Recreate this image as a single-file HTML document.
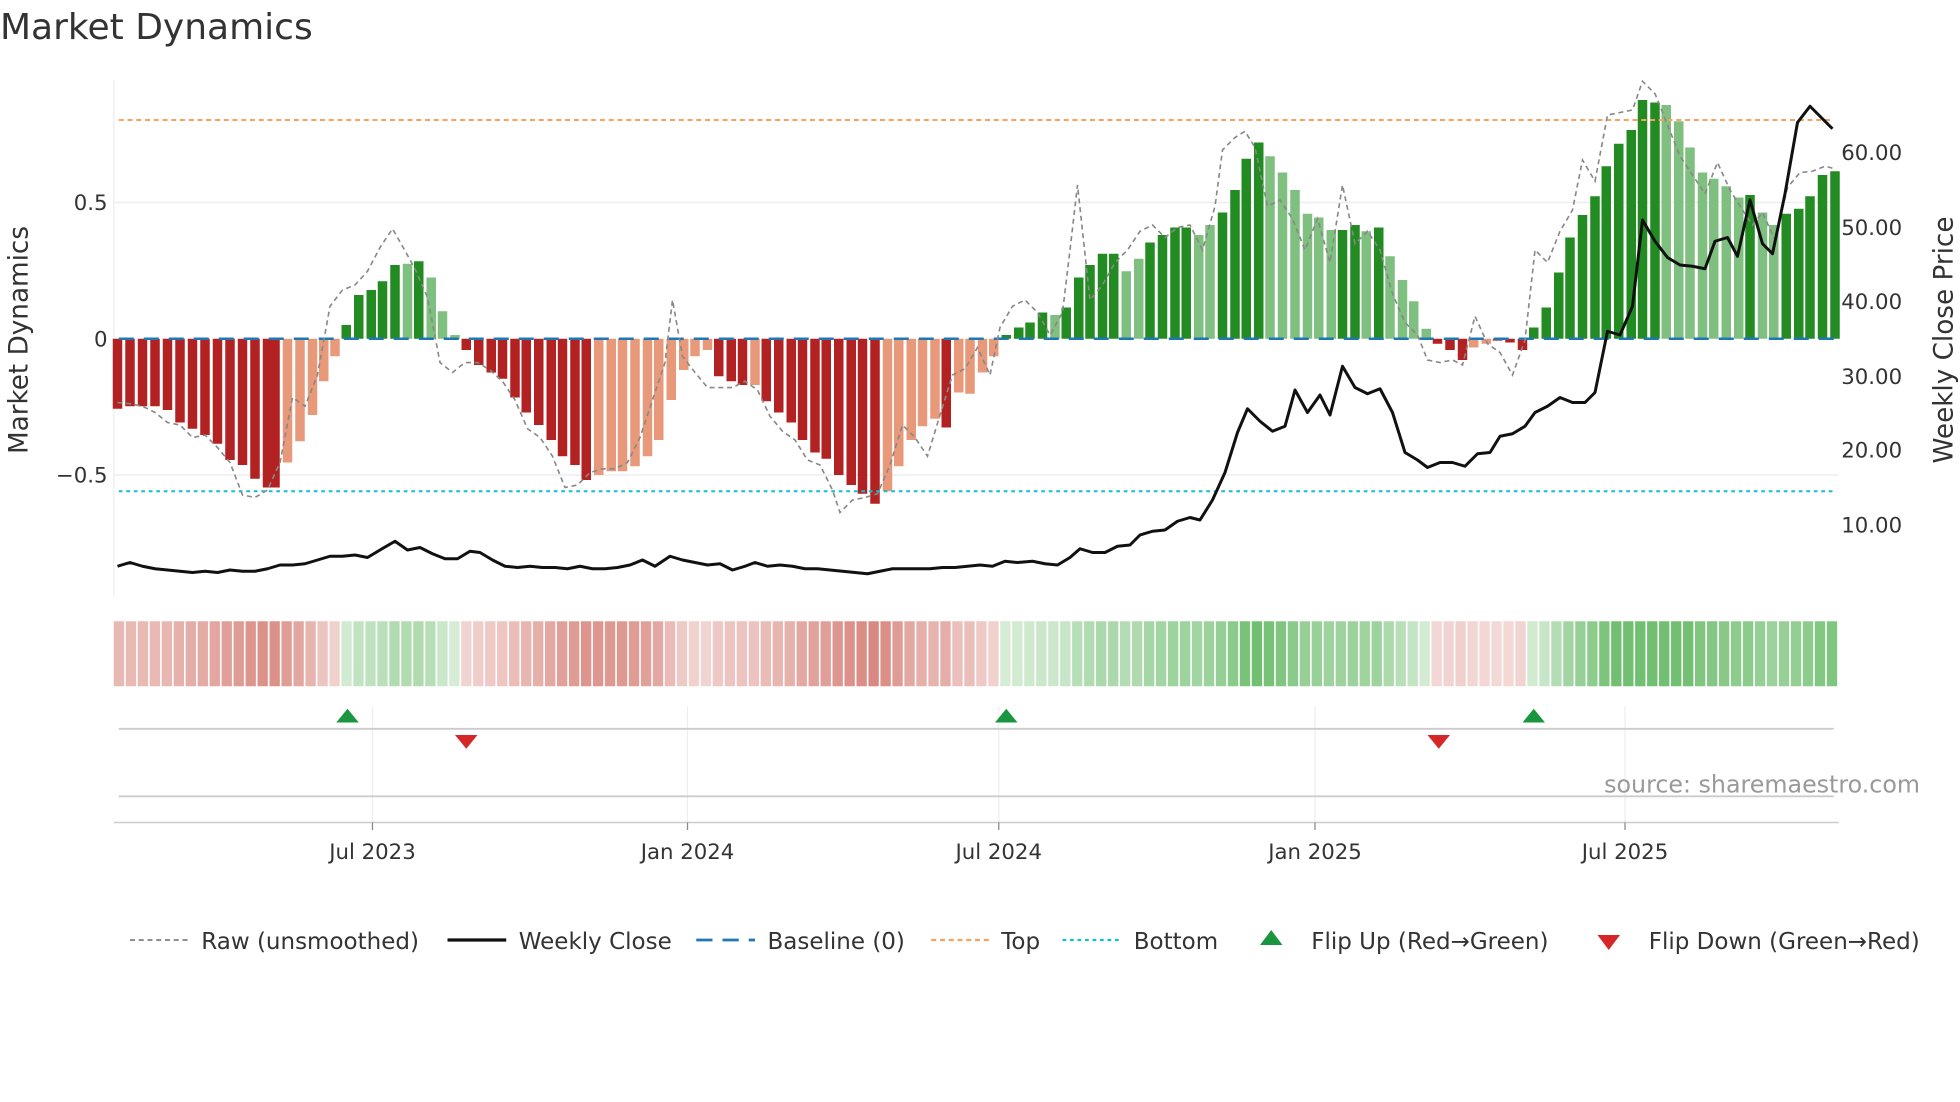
<!DOCTYPE html>
<html><head><meta charset="utf-8">
<style>
html,body{margin:0;padding:0;background:#fff;width:1960px;height:1102px;overflow:hidden}
svg{display:block}
text{font-family:"DejaVu Sans","Liberation Sans",sans-serif}
</style></head><body>
<svg id="s" width="1960" height="1102" viewBox="0 0 1568 881.6" xmlns="http://www.w3.org/2000/svg">
<rect width="1568" height="882" fill="#fff"/>
<text x="0" y="31" font-size="28.8" fill="#333">Market Dynamics</text>
<line x1="91" y1="162" x2="1471" y2="162" stroke="#eceef3" stroke-width="1.2"/>
<line x1="91" y1="380" x2="1471" y2="380" stroke="#eceef3" stroke-width="1.2"/>
<line x1="91" y1="64" x2="91" y2="478" stroke="#eee" stroke-width="1"/>
<g id="bars"></g>
<g id="heat"></g>
<line x1="95" y1="271" x2="1467" y2="271" stroke="#1f77b4" stroke-width="2" stroke-dasharray="12,8"/>
<line x1="95" y1="96" x2="1467" y2="96" stroke="#f4a460" stroke-width="1.6" stroke-dasharray="4,3"/>
<line x1="95" y1="393" x2="1467" y2="393" stroke="#17becf" stroke-width="1.6" stroke-dasharray="3,3"/>
<polyline id="raw" fill="none" stroke="#888" stroke-width="1.3" stroke-dasharray="4,3"/>
<polyline id="price" fill="none" stroke="#111" stroke-width="2.4" stroke-linejoin="round"/>
<g font-size="17" fill="#333" text-anchor="end">
<text x="86" y="168">0.5</text><text x="86" y="277">0</text><text x="86" y="386">−0.5</text>
</g>
<text transform="translate(22,272) rotate(-90)" font-size="21" fill="#333" text-anchor="middle">Market Dynamics</text>
<g font-size="17" fill="#333" text-anchor="start">
<text x="1473" y="128">60.00</text><text x="1473" y="188">50.00</text><text x="1473" y="247">40.00</text>
<text x="1473" y="307">30.00</text><text x="1473" y="366">20.00</text><text x="1473" y="426">10.00</text>
</g>
<text transform="translate(1562,272) rotate(-90)" font-size="21" fill="#333" text-anchor="middle">Weekly Close Price</text>
<g stroke="#eceef3" stroke-width="1">
<line x1="298" y1="565" x2="298" y2="658"/><line x1="550" y1="565" x2="550" y2="658"/>
<line x1="799" y1="565" x2="799" y2="658"/><line x1="1052" y1="565" x2="1052" y2="658"/>
<line x1="1300" y1="565" x2="1300" y2="658"/>
</g>
<line x1="95" y1="583" x2="1467" y2="583" stroke="#ccc" stroke-width="1.5"/>
<line x1="95" y1="637" x2="1467" y2="637" stroke="#ccc" stroke-width="1.5"/>
<line x1="91" y1="658" x2="1471" y2="658" stroke="#ccc" stroke-width="1.2"/>
<g fill="#1a9641">
<polygon points="278,567 269,578 287,578"/><polygon points="805,567 796,578 814,578"/><polygon points="1227,567 1218,578 1236,578"/>
</g>
<g fill="#d62728">
<polygon points="373,599 364,588 382,588"/><polygon points="1151,599 1142,588 1160,588"/>
</g>
<g stroke="#888" stroke-width="1">
<line x1="298" y1="658" x2="298" y2="664"/><line x1="550" y1="658" x2="550" y2="664"/><line x1="799" y1="658" x2="799" y2="664"/><line x1="1052" y1="658" x2="1052" y2="664"/><line x1="1300" y1="658" x2="1300" y2="664"/>
</g>
<g font-size="17" fill="#333" text-anchor="middle">
<text x="298" y="687">Jul 2023</text><text x="550" y="687">Jan 2024</text><text x="799" y="687">Jul 2024</text><text x="1052" y="687">Jan 2025</text><text x="1300" y="687">Jul 2025</text>
</g>
<text x="1536" y="634" font-size="19" fill="#999" text-anchor="end">source: sharemaestro.com</text>
<g font-size="18.4" fill="#333">
<line x1="104" y1="752" x2="150" y2="752" stroke="#888" stroke-width="1.5" stroke-dasharray="4,3"/>
<text x="161" y="759">Raw (unsmoothed)</text>
<line x1="358" y1="752" x2="405" y2="752" stroke="#111" stroke-width="2.6"/>
<text x="415" y="759">Weekly Close</text>
<line x1="557" y1="752" x2="604" y2="752" stroke="#1f77b4" stroke-width="2.2" stroke-dasharray="13,8"/>
<text x="614" y="759">Baseline (0)</text>
<line x1="745" y1="752" x2="791" y2="752" stroke="#f4a460" stroke-width="1.8" stroke-dasharray="4,3"/>
<text x="801" y="759">Top</text>
<line x1="850" y1="752" x2="896" y2="752" stroke="#17becf" stroke-width="1.8" stroke-dasharray="3,3"/>
<text x="907" y="759">Bottom</text>
<polygon points="1017,744 1008,756 1026,756" fill="#1a9641"/>
<text x="1049" y="759">Flip Up (Red→Green)</text>
<polygon points="1287,760 1278,748 1296,748" fill="#d62728"/>
<text x="1319" y="759">Flip Down (Green→Red)</text>
</g>
</svg>
<script>
var B=[[94,327,'d'],[104,325,'d'],[114,325,'d'],[124,325,'d'],[134,328,'d'],[144,338,'d'],[154,343,'d'],[164,348,'d'],[174,355,'d'],[184,368,'d'],[194,372,'d'],[204,383,'d'],[214,390,'d'],[220,390,'d'],[230,370,'l'],[240,353,'l'],[250,332,'l'],[259,305,'l'],[268,285,'l'],
[277,260,'d'],[287,236,'d'],[297,232,'d'],[306,225,'d'],[316,212,'d'],[326,211,'l'],[335,209,'d'],[345,222,'l'],[354,249,'l'],[364,268,'l'],
[373,280,'d'],[383,292,'d'],[393,298,'d'],[402,303,'d'],[412,318,'d'],[421,330,'d'],[431,340,'d'],[441,352,'d'],[450,365,'d'],[460,372,'d'],[469,384,'d'],[479,380,'l'],[489,377,'l'],[498,377,'l'],[508,373,'l'],[518,365,'l'],[527,352,'l'],[537,320,'l'],[547,296,'l'],[556,285,'l'],[566,280,'l'],
[575,301,'d'],[585,305,'d'],[594,308,'d'],[604,308,'l'],[613,321,'d'],[623,330,'d'],[633,338,'d'],[642,352,'d'],[652,362,'d'],[661,367,'d'],[671,380,'d'],[681,388,'d'],[690,395,'d'],[700,403,'d'],[710,393,'l'],[719,373,'l'],[729,352,'l'],[738,341,'l'],[748,335,'l'],[757,342,'d'],[767,314,'l'],[776,315,'l'],[786,298,'l'],[795,285,'l'],
[805,268,'d'],[815,262,'d'],[824,258,'d'],[834,250,'d'],[844,252,'l'],[853,246,'d'],[863,222,'d'],[872,212,'d'],[882,203,'d'],[891,203,'d'],[901,217,'l'],[911,207,'l'],[920,194,'d'],[930,188,'d'],[940,182,'d'],[949,182,'d'],[959,188,'l'],[968,180,'l'],[978,170,'d'],[988,152,'d'],[997,127,'d'],[1007,114,'d'],[1016,125,'l'],[1026,138,'l'],[1036,152,'l'],[1046,171,'l'],[1055,174,'l'],[1065,184,'l'],[1074,184,'d'],[1084,180,'d'],[1093,185,'l'],[1103,182,'d'],[1112,205,'l'],[1122,224,'l'],[1131,241,'l'],[1141,263,'l'],
[1150,275,'d'],[1160,280,'d'],[1170,288,'d'],[1179,278,'l'],[1189,275,'l'],[1198,272,'d'],[1208,274,'d'],[1218,280,'d'],
[1227,262,'d'],[1237,246,'d'],[1247,218,'d'],[1256,190,'d'],[1266,172,'d'],[1276,157,'d'],[1285,133,'d'],[1295,115,'d'],[1305,104,'d'],[1314,80,'d'],[1324,82,'d'],[1333,84,'l'],[1343,97,'l'],[1352,118,'l'],[1362,138,'l'],[1371,143,'l'],[1381,149,'l'],[1391,158,'l'],[1400,156,'d'],[1410,170,'l'],[1419,180,'l'],[1429,171,'d'],[1439,167,'d'],[1448,157,'d'],[1458,140,'d'],[1468,137,'d']];
var ns="http://www.w3.org/2000/svg",g=document.getElementById('bars'),h=document.getElementById('heat');
var hx=91,hw=(1471-91)/B.length;
B.forEach(function(b,i){
 var up=b[1]<271,c=up?(b[2]=='d'?'#228b22':'#7fbf7f'):(b[2]=='d'?'#b22222':'#e8997a');
 var r=document.createElementNS(ns,'rect');
 r.setAttribute('x',b[0]-3.8);r.setAttribute('width',7.6);
 r.setAttribute('y',Math.min(b[1],271));r.setAttribute('height',Math.max(Math.abs(271-b[1]),1.5));
 r.setAttribute('fill',c);g.appendChild(r);
 var v=Math.abs(271-b[1])/218,a=0.25+Math.min(v,0.8)*0.9;
 var q=document.createElementNS(ns,'rect');
 q.setAttribute('x',hx+i*hw);q.setAttribute('width',hw-1.3);q.setAttribute('y',497);q.setAttribute('height',52);
 q.setAttribute('fill',up?'#2ca02c':'#c0392b');q.setAttribute('fill-opacity',Math.min(a,0.9)*0.75);h.appendChild(q);
});
var P="94,453 104,450 114,453 124,455 134,456 144,457 154,458 164,457 174,458 184,456 194,457 204,457 214,455 224,452 234,452 244,451 254,448 264,445 274,445 284,444 294,446 304,440 316,433 326,440 336,438 346,443 356,447 366,447 376,441 384,442 394,448 404,453 414,454 424,453 434,454 444,454 454,455 464,453 474,455 484,455 494,454 504,452 514,448 524,453 536,445 546,448 556,450 566,452 576,451 586,456 596,453 604,450 614,453 624,452 634,453 644,455 654,455 664,456 674,457 684,458 694,459 704,457 714,455 724,455 734,455 744,455 754,454 764,454 774,453 784,452 794,453 804,449 814,450 826,449 836,451 846,452 856,446 864,439 874,442 884,442 894,437 904,436 912,428 922,425 932,424 942,417 952,414 960,416 970,400 980,378 990,346 998,327 1008,337 1018,345 1028,341 1036,312 1046,330 1056,316 1064,332 1074,293 1084,310 1094,315 1104,311 1114,330 1124,362 1134,368 1142,374 1152,370 1162,370 1172,373 1182,363 1192,362 1200,349 1210,347 1220,341 1228,330 1238,325 1248,318 1258,322 1268,322 1276,314 1286,265 1296,268 1306,245 1314,176 1324,193 1334,206 1344,212 1354,213 1364,215 1372,193 1382,190 1390,205 1400,160 1410,195 1418,203 1428,155 1438,98 1448,85 1458,95 1466,103";
document.getElementById('price').setAttribute('points',P);
var R="94,322 104,323 114,325 124,330 134,338 144,340 154,350 164,348 174,358 184,370 194,396 204,398 214,392 224,370 234,318 244,325 254,300 264,245 274,232 284,228 294,217 304,198 314,183 322,197 332,215 342,238 352,290 362,298 372,290 382,290 392,296 402,305 412,320 422,343 432,350 442,365 452,390 462,388 472,378 482,375 492,375 502,370 512,350 522,320 532,290 538,240 546,285 556,298 566,310 576,310 586,310 596,305 606,312 616,333 626,345 636,352 646,368 656,372 666,392 672,410 682,400 692,398 702,395 712,372 722,340 732,350 742,365 752,332 762,300 772,295 782,278 792,300 800,262 810,245 820,240 830,250 840,268 850,250 856,200 862,148 872,240 882,228 892,210 902,200 912,185 922,180 932,190 942,182 952,180 962,200 972,165 978,120 988,110 996,105 1004,118 1014,165 1024,160 1034,175 1044,200 1054,175 1064,210 1074,148 1084,195 1094,185 1104,200 1114,235 1124,258 1134,268 1142,288 1152,290 1162,288 1170,292 1180,253 1190,275 1200,282 1210,300 1220,272 1228,200 1238,210 1248,185 1258,168 1266,128 1276,145 1286,92 1296,90 1306,88 1314,65 1324,75 1334,100 1344,125 1354,140 1364,155 1374,130 1384,152 1394,168 1402,180 1410,170 1420,192 1430,150 1440,138 1450,137 1460,133 1468,135";
document.getElementById('raw').setAttribute('points',R);
</script>
</body></html>
